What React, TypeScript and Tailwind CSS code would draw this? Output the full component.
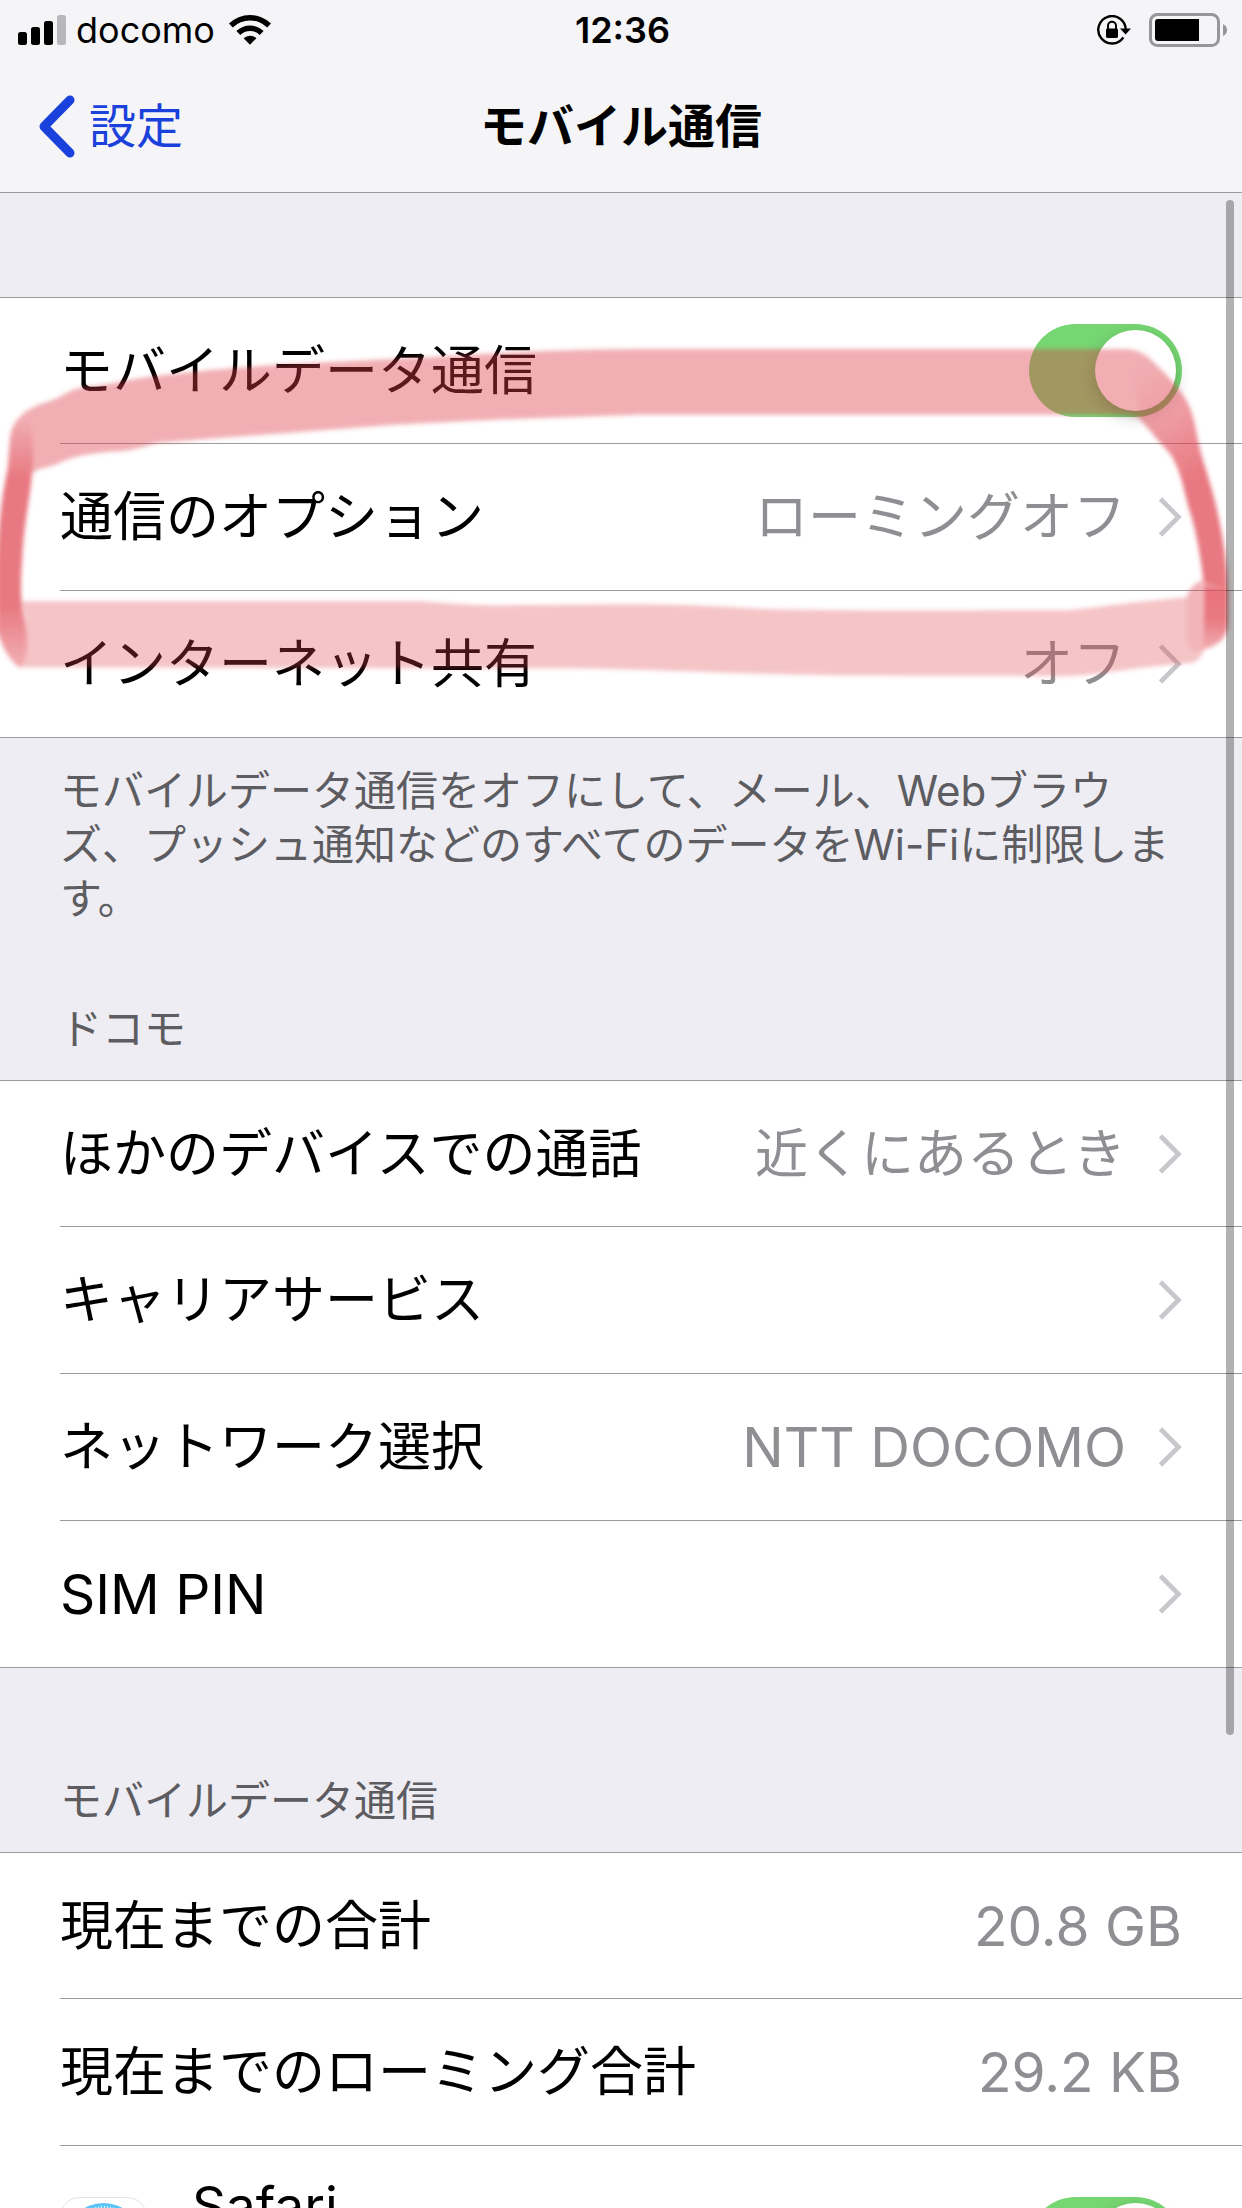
import React, { useState } from 'react';

type Item = { label: string; value?: string; latin?: boolean };

const optionRows: Item[] = [
  { label: '通信のオプション', value: 'ローミングオフ' },
  { label: 'インターネット共有', value: 'オフ' },
];

const carrierRows: Item[] = [
  { label: 'ほかのデバイスでの通話', value: '近くにあるとき' },
  { label: 'キャリアサービス' },
  { label: 'ネットワーク選択', value: 'NTT DOCOMO' },
  { label: 'SIM PIN', latin: true },
];

const usageRows: Item[] = [
  { label: '現在までの合計', value: '20.8 GB' },
  { label: '現在までのローミング合計', value: '29.2 KB' },
];

const SignalIcon = () => (
  <svg viewBox="0 0 48 30" className="w-12 h-[30px]" aria-hidden="true">
    <rect x="0" y="17" width="9" height="13" rx="2.5" />
    <rect x="13" y="12" width="9" height="18" rx="2.5" />
    <rect x="26" y="6" width="9" height="24" rx="2.5" />
    <rect x="39" y="0" width="9" height="30" rx="2.5" fill="#b8b8ba" />
  </svg>
);

const WifiIcon = () => (
  <svg viewBox="0 0 42 30" className="w-[42px] h-[30px]" aria-hidden="true">
    <path d="M0 8.6A30 30 0 0 1 42 8.6L38.2 12.4A24.6 24.6 0 0 0 3.8 12.4Z" />
    <path d="M7.4 16A19.6 19.6 0 0 1 34.6 16L30.7 19.9A14 14 0 0 0 11.3 19.9Z" />
    <path d="M14.6 23.2A9.4 9.4 0 0 1 27.4 23.2L21 29.8Z" />
  </svg>
);

const RotationLockIcon = () => (
  <svg viewBox="0 0 34 30" className="w-[34px] h-[30px]" aria-hidden="true">
    <path d="M26.4 22.4A13.7 13.7 0 1 1 28.7 15" fill="none" stroke="#000" strokeWidth="2.4" />
    <path d="M23 13.5H34L28.6 19.4Z" />
    <rect x="9" y="13.6" width="12" height="9.4" rx="1.4" />
    <path d="M11 14.5V10.8A4 4 0 0 1 19 10.8V14.5" fill="none" stroke="#000" strokeWidth="2" />
  </svg>
);

const BatteryIcon = () => (
  <svg viewBox="0 0 78 34" className="w-[78px] h-[34px]" aria-hidden="true">
    <rect x="1.5" y="1.5" width="68" height="31" rx="7" fill="none" stroke="#969698" strokeWidth="3" />
    <path d="M9 6H50V28H9Q6 28 6 25V9Q6 6 9 6Z" />
    <path d="M74 11Q78 13 78 17Q78 21 74 23Z" fill="#969698" />
  </svg>
);

const Chevron = () => (
  <svg viewBox="0 0 24 40" className="w-6 h-10 shrink-0" aria-hidden="true">
    <path d="M2.5 2L20.5 20L2.5 38" fill="none" stroke="#c7c7cc" strokeWidth="4.6" />
  </svg>
);

const SafariIcon = () => (
  <svg viewBox="0 0 87 87" className="w-[87px] h-[87px] shrink-0" aria-hidden="true">
    <rect x="0.5" y="0.5" width="86" height="86" rx="19" fill="#fff" stroke="#e3e3e5" />
    <circle cx="43.5" cy="43.5" r="37.5" fill="#5ac3f8" />
    <circle cx="43.5" cy="43.5" r="32" fill="none" stroke="#fff" strokeWidth="5" strokeDasharray="0.9 1.9" />
    <path d="M66 21L47 47L40 40Z" fill="#ff3b30" />
    <path d="M21 66L40 40L47 47Z" fill="#fff" />
  </svg>
);

// Highlighter loop drawn over the first group
const MarkerLoop = () => (
  <svg
    viewBox="0 297 1242 441"
    preserveAspectRatio="none"
    className="absolute inset-0 w-full h-full pointer-events-none"
    aria-hidden="true"
  >
    <defs>
      <filter id="soft" x="-5%" y="-5%" width="110%" height="110%">
        <feGaussianBlur stdDeviation="2" />
      </filter>
      <linearGradient id="right" gradientUnits="userSpaceOnUse" x1="1130" y1="365" x2="1200" y2="475">
        <stop offset="0" stopColor="#e03c49" stopOpacity="0" />
        <stop offset="0.5" stopColor="#e03c49" stopOpacity="0.18" />
        <stop offset="1" stopColor="#e03c49" stopOpacity="0.48" />
      </linearGradient>
      <linearGradient id="left" gradientUnits="userSpaceOnUse" x1="0" y1="415" x2="0" y2="668">
        <stop offset="0" stopColor="#e03c49" stopOpacity="0" />
        <stop offset="0.25" stopColor="#e03c49" stopOpacity="0.48" />
        <stop offset="0.75" stopColor="#e03c49" stopOpacity="0.48" />
        <stop offset="1" stopColor="#e03c49" stopOpacity="0" />
      </linearGradient>
      <linearGradient id="rightEnd" gradientUnits="userSpaceOnUse" x1="0" y1="590" x2="0" y2="650">
        <stop offset="0" stopColor="#e03c49" stopOpacity="0.56" />
        <stop offset="0.5" stopColor="#e03c49" stopOpacity="0.5" />
        <stop offset="1" stopColor="#e03c49" stopOpacity="0.08" />
      </linearGradient>
    </defs>
    <g filter="url(#soft)">
      <path
        fill="#de3f4b"
        fillOpacity="0.41"
        d="M10 440C12 420 22 408 51 400C66 394 68 389 85 386C110 384 120 380 150 376C200 369 240 367 277 364L396 358C480 353 560 348 640 348H1124C1140 348 1148 355 1156 364C1174 381 1186 395 1191 410C1196 425 1196 435 1200 450L1211 485C1220 515 1226 550 1227 590L1204 582C1200 550 1194 525 1188 505C1182 480 1180 470 1171 454C1158 440 1148 427 1142 421C1138 416 1132 414 1122 414H640L495 419L396 424L277 433L158 442C140 447 130 451 110 451C90 453 75 455 62 461C50 468 38 466 32 473C30 500 24 520 22 560C20 590 21 605 25 620C29 640 28 655 20 668C8 660 2 645 -3 630V560C0 500 6 480 8 465Z"
      />
      <path
        fill="url(#right)"
        d="M1128 348C1140 348 1150 358 1160 368C1176 384 1187 397 1191 410C1196 425 1198 440 1203 460C1215 500 1228 550 1228 590L1204 586C1200 550 1196 525 1189 508C1182 480 1180 470 1171 454C1158 440 1148 427 1142 421Z"
      />
      <path
        fill="url(#left)"
        d="M10 430C14 416 28 410 31 424C34 440 33 460 32 473C30 500 24 520 22 560C20 590 21 605 24 620C28 640 26 655 20 667C8 660 2 645 -3 630V560C0 500 6 480 8 465Z"
      />
      <path
        fill="#de3f4b"
        fillOpacity="0.31"
        d="M22 601H420C450 603 470 605 500 605L621 604C680 604 720 606 768 609C860 611 960 610 1068 610C1100 607 1130 602 1156 600L1187 597C1188 590 1194 583 1203 580L1204 649C1200 660 1196 663 1187 663L1156 666C1130 668 1100 675 1065 676C1000 675 930 676 859 675C800 676 700 671 621 669C560 667 500 669 475 668L20 667C30 650 28 630 22 601Z"
      />
      <path fill="#de3f4b" fillOpacity="0.12" d="M1187 597C1188 590 1194 583 1203 580L1206 649C1198 655 1192 650 1187 642Z" />
      <path fill="#de3f4b" fillOpacity="0.36" d="M1204 586L1228 590V625C1226 640 1216 646 1204 649Z" />
      <path fill="url(#rightEnd)" d="M1204 586L1228 590V625C1226 640 1216 646 1204 649Z" />
    </g>
  </svg>
);

const Toggle = ({ id, label }: { id: string; label: string }) => {
  const [on, setOn] = useState(true);
  return (
    <input
      id={id}
      type="checkbox"
      role="switch"
      aria-label={label}
      checked={on}
      onChange={() => setOn(!on)}
      className="appearance-none flex shrink-0 justify-start checked:justify-end w-[153px] h-[93px] p-[6px] rounded-full bg-[#e5e5ea] checked:bg-[#76d672] before:content-[''] before:size-[81px] before:rounded-full before:bg-white before:shadow-[0_6px_16px_rgba(0,0,0,0.22)]"
    />
  );
};

const rowClass = 'flex-1 h-full flex justify-between pr-[60px] border-b border-[#9c9ca0] text-left';

const LinkRow = ({ label, value, latin }: Item) => (
  <li className="flex h-[147px] first:h-[146px] pl-[60px] last:pl-0">
    <button className={`${rowClass} items-center [li:last-child>&]:pl-[60px]`}>
      <span className={latin ? 'text-[55px]' : ''}>{label}</span>
      <span className="flex items-center gap-8 text-[#8e8e93]">
        {value && <span className={value === 'NTT DOCOMO' ? 'text-[55px]' : ''}>{value}</span>}
        <Chevron />
      </span>
    </button>
  </li>
);

const App: React.FC = () => {
  return (
    <div
      lang="ja"
      className="relative h-screen overflow-hidden bg-[#eeedf3] text-black text-[53px] leading-[64px] font-['Inter','Noto_Sans_CJK_JP',sans-serif]"
    >
      <header className="bg-[#f5f5f8] border-b border-[#9c9ca0]">
        <div className="grid grid-cols-[1fr_auto_1fr] items-center h-[60px] pl-[18px] pr-[15px] text-[36px] leading-[40px]">
          <div className="flex items-center">
            <SignalIcon />
            <span className="pl-[10px] pr-[14px]">docomo</span>
            <WifiIcon />
          </div>
          <time className="font-semibold">12:36</time>
          <div className="flex items-center justify-end gap-[18px]">
            <RotationLockIcon />
            <BatteryIcon />
          </div>
        </div>
        <nav className="grid grid-cols-[1fr_auto_1fr] items-center h-[132px] px-[38px] text-[47px]">
          <a href="#settings" className="flex items-center gap-[14px] text-[#1a41db]">
            <svg viewBox="0 0 37 63" className="w-[37px] h-[63px]" aria-hidden="true">
              <path d="M32 5L6 31.5L32 58" fill="none" stroke="currentColor" strokeWidth="9" strokeLinecap="round" strokeLinejoin="round" />
            </svg>
            設定
          </a>
          <h1 className="font-bold">モバイル通信</h1>
        </nav>
      </header>

      <main className="pt-[104px]">
        <section className="relative bg-white border-t border-[#9c9ca0]">
          <ul>
            <li className="flex h-[146px] pl-[60px]">
              <div className={`${rowClass} items-center`}>
                <label htmlFor="mobile-data">モバイルデータ通信</label>
                <Toggle id="mobile-data" label="モバイルデータ通信" />
              </div>
            </li>
            {optionRows.map((row) => (
              <LinkRow key={row.label} {...row} />
            ))}
          </ul>
          <MarkerLoop />
        </section>

        <p className="px-[60px] pt-[26px] text-[42px] leading-[54px] text-[#5c5c61]">
          モバイルデータ通信をオフにして、メール、Webブラウズ、プッシュ通知などのすべてのデータをWi-Fiに制限します。
        </p>

        <section>
          <h2 className="px-[60px] pt-[76px] pb-[24px] text-[42px] leading-[54px] text-[#5c5c61]">ドコモ</h2>
          <ul className="bg-white border-t border-[#9c9ca0]">
            {carrierRows.map((row) => (
              <LinkRow key={row.label} {...row} />
            ))}
          </ul>
        </section>

        <section>
          <h2 className="px-[60px] pt-[106px] pb-[24px] text-[42px] leading-[54px] text-[#5c5c61]">モバイルデータ通信</h2>
          <ul className="bg-white border-t border-[#9c9ca0]">
            {usageRows.map(({ label, value }) => (
              <li key={label} className="flex h-[147px] first:h-[146px] pl-[60px]">
                <div className={`${rowClass} items-center`}>
                  <span>{label}</span>
                  <span className="text-[55px] text-[#8e8e93]">{value}</span>
                </div>
              </li>
            ))}
            <li className="flex h-[190px] pl-[60px]">
              <div className={`${rowClass} items-start pt-[28px]`}>
                <div className="flex items-start gap-[45px]">
                  <div className="pt-[23px]">
                    <SafariIcon />
                  </div>
                  <label htmlFor="safari-data">Safari</label>
                </div>
                <div className="pt-[23px]">
                  <Toggle id="safari-data" label="Safari" />
                </div>
              </div>
            </li>
          </ul>
        </section>
      </main>

      {/* scroll indicator */}
      <div className="absolute right-[8px] top-[200px] h-[1535px] w-[8px] rounded-full bg-black/30" />
    </div>
  );
};

export default App;
